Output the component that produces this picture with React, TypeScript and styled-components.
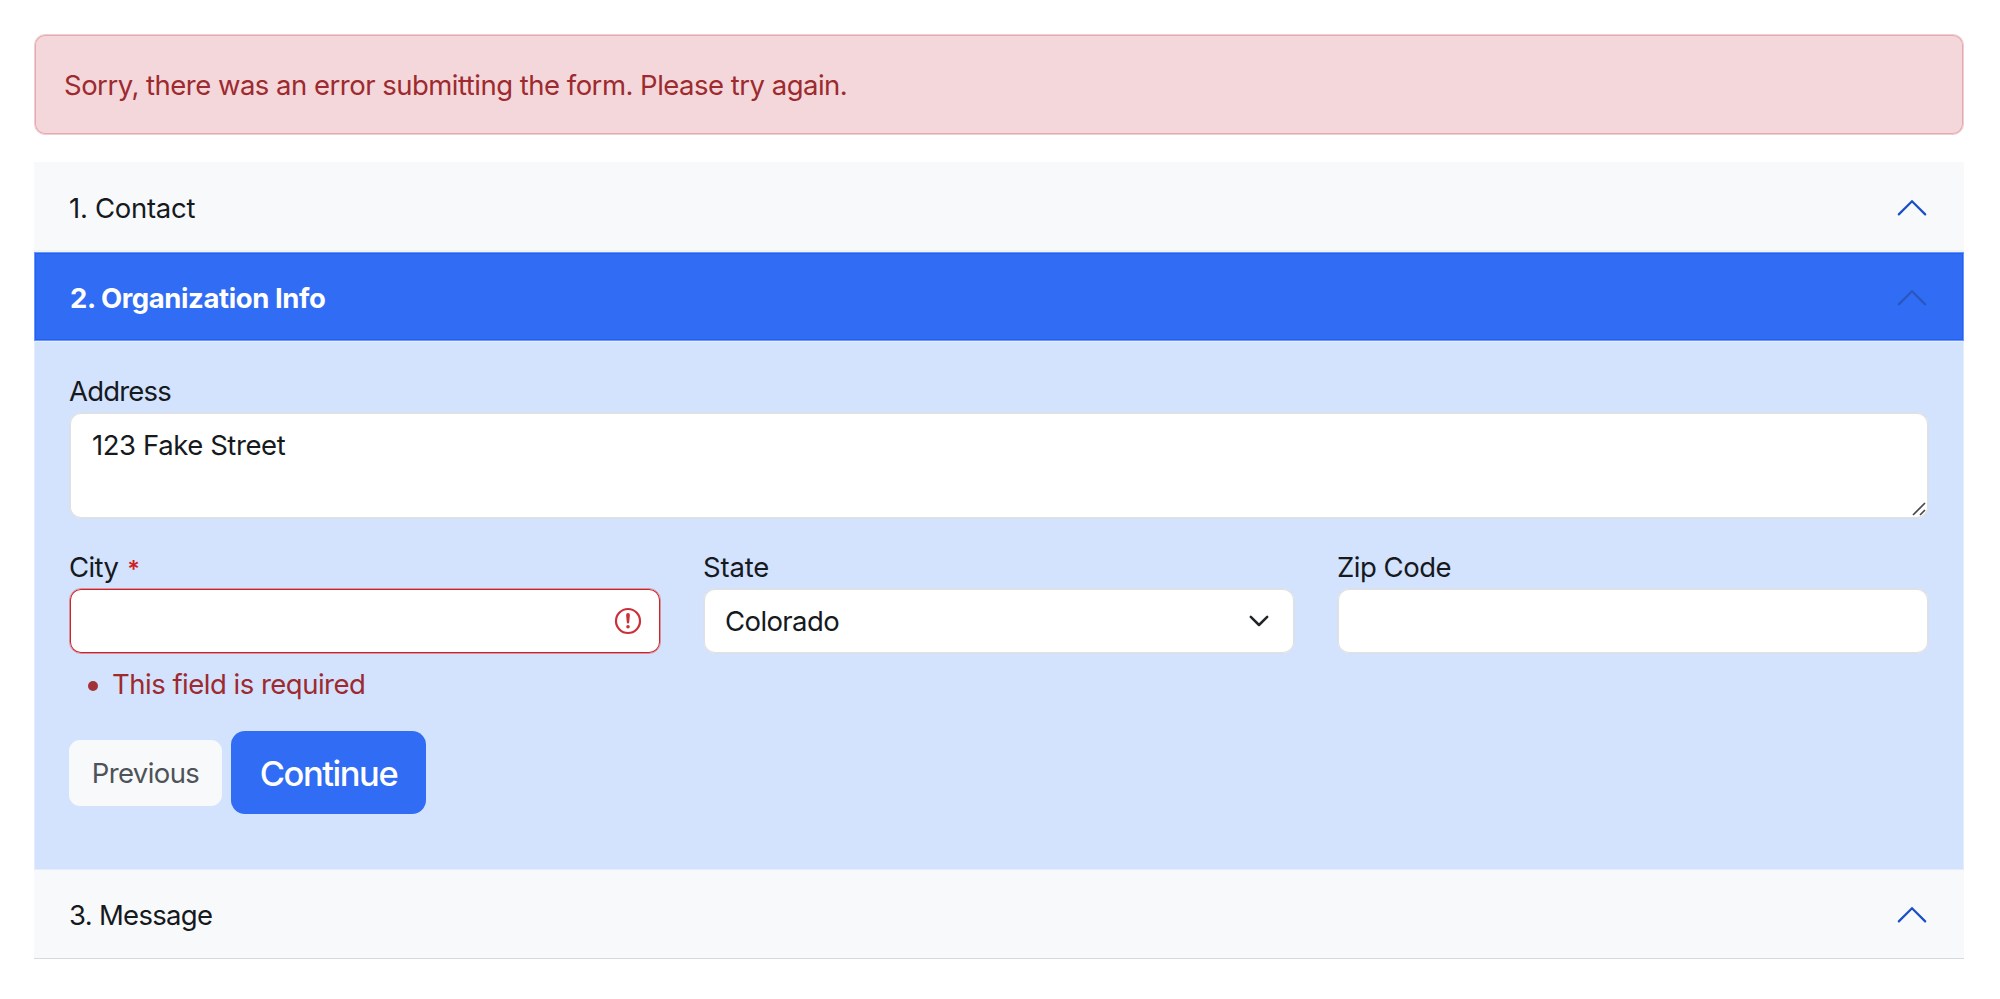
import React from 'react';
import styled, { createGlobalStyle } from 'styled-components';

const GlobalStyle = createGlobalStyle`
  *, *::before, *::after { box-sizing: border-box; }
  body {
    margin: 0;
    background: #fff;
    color: #16191d;
    font-family: Inter, "Liberation Sans", sans-serif;
    font-size: 27.5px;
    line-height: 42px;
  }
`;

const Page = styled.main`
  display: flex;
  flex-direction: column;
  gap: 27px;
  width: 2000px;
  height: 999px;
  padding: 34px 36px 0 34px;
`;

const Alert = styled.div`
  height: 101px;
  padding: 29px 29px;
  border: 1px solid #efcdd1;
  border-radius: 11px;
  background: #f3d7da;
  box-shadow: inset 0 0 0 1px #e6a9b0;
  color: #9d2a2f;
  letter-spacing: -0.51px;
`;

const Accordion = styled.div`
  display: flex;
  flex-direction: column;
`;

const Header = styled.button<{ $active?: boolean; $last?: boolean; $spacing: number }>`
  display: flex;
  align-items: center;
  justify-content: space-between;
  height: ${(p) => (p.$active || p.$last ? 89 : 90)}px;
  padding: ${(p) => (p.$active ? '2px 36px 0 35px' : p.$last ? '1px 37px 0 35px' : '2px 37px 0 35px')};
  border: ${(p) => (p.$active ? '1px solid #6c97f8' : '0')};
  background: ${(p) => (p.$active ? '#316cf4' : '#f8f9fb')};
  box-shadow: ${(p) =>
    p.$active ? 'inset 0 0 0 1px #1f5ff2' : p.$last ? 'inset 0 -1px 0 #d5dae0' : 'inset 0 -2px 0 #f1f2f3'};
  color: ${(p) => (p.$active ? '#fff' : '#16191d')};
  font: inherit;
  font-weight: ${(p) => (p.$active ? 700 : 400)};
  letter-spacing: ${(p) => p.$spacing}px;
  text-align: left;
`;

const Panel = styled.form`
  height: 529px;
  padding: 28px 34px 0;
  border: 1px solid #e4edfd;
  background: #d3e2fd;
`;

const Field = styled.div`
  display: flex;
  flex-direction: column;
`;

const Label = styled.label<{ $spacing: number }>`
  height: 42px;
  letter-spacing: ${(p) => p.$spacing}px;
`;

const Star = styled.span`
  margin-left: 9px;
  color: #cf1f24;
  font-size: 23.5px;
  font-weight: 600;
`;

const Control = styled.div`
  position: relative;
  display: flex;
`;

const TextArea = styled.textarea`
  display: block;
  width: 100%;
  height: 107px;
  padding: 11px 22px;
  border: 1px solid #d8e0ec;
  border-radius: 12px;
  outline: 0;
  background: #fff;
  box-shadow: inset 0 0 0 1px #dfe1e4;
  color: inherit;
  font: inherit;
  letter-spacing: -0.42px;
  resize: none;
`;

const Row = styled.div`
  display: grid;
  grid-template-columns: repeat(3, 592px);
  column-gap: 42px;
  margin-top: 27px;
`;

const Input = styled.input<{ $invalid?: boolean }>`
  width: 100%;
  height: 66px;
  padding: 0 21px;
  border: 1px solid ${(p) => (p.$invalid ? '#d8939f' : '#d8e0ec')};
  border-radius: 12px;
  outline: 0;
  background: #fff;
  box-shadow: inset 0 0 0 1px ${(p) => (p.$invalid ? '#c9232c' : '#dfe1e4')};
  color: inherit;
  font: inherit;
`;

const SelectBox = styled.div`
  display: flex;
  align-items: center;
  justify-content: space-between;
  width: 100%;
  height: 66px;
  padding: 0 25px 0 21px;
  border: 1px solid #d8e0ec;
  border-radius: 12px;
  background: #fff;
  box-shadow: inset 0 0 0 1px #dfe1e4;
  letter-spacing: -0.6px;
`;

const InvalidMark = styled.svg`
  position: absolute;
  top: 19px;
  right: 19px;
`;

const Grip = styled.svg`
  position: absolute;
  right: 2px;
  bottom: 2px;
`;

const Errors = styled.ul`
  display: flex;
  flex-direction: column;
  margin: 9px 0 0;
  padding: 0 0 0 19px;
  list-style: none;
  color: #9d2a2f;
  letter-spacing: -0.5px;
`;

const ErrorItem = styled.li`
  display: flex;
  align-items: center;
  gap: 14px;

  &::before {
    content: '';
    width: 10px;
    height: 10px;
    margin-top: 3px;
    border-radius: 50%;
    background: #a33237;
  }
`;

const Actions = styled.div`
  display: flex;
  align-items: center;
  gap: 9px;
  margin-top: 26px;
`;

const Button = styled.button<{ $primary?: boolean }>`
  width: ${(p) => (p.$primary ? 195 : 153)}px;
  height: ${(p) => (p.$primary ? 83 : 66)}px;
  padding: ${(p) => (p.$primary ? '2px 0 0' : '0')};
  border: 0;
  border-radius: ${(p) => (p.$primary ? 14 : 11)}px;
  background: ${(p) => (p.$primary ? '#316cf4' : '#f8f9fb')};
  color: ${(p) => (p.$primary ? '#fff' : '#4d5358')};
  font: inherit;
  font-size: ${(p) => (p.$primary ? '34.5px' : '27.5px')};
  font-weight: ${(p) => (p.$primary ? 500 : 400)};
  letter-spacing: ${(p) => (p.$primary ? '-1.45px' : '-0.6px')};
`;

const Chevron = ({ color = '#1a4fc4' }: { color?: string }) => (
  <svg width="30" height="18" viewBox="0 0 30 18" fill="none">
    <path d="M1.8 15.4 15 2.2l13.2 13.2" stroke={color} strokeWidth="2.2" strokeLinecap="round" />
  </svg>
);

export default function App() {
  return (
    <>
      <GlobalStyle />
      <Page>
        <Alert role="alert">Sorry, there was an error submitting the form. Please try again.</Alert>
        <Accordion>
          <Header type="button" $spacing={-0.28}>
            1. Contact
            <Chevron />
          </Header>
          <Header type="button" $active $spacing={-0.41}>
            2. Organization Info
            <Chevron color="#2957bf" />
          </Header>
          <Panel>
            <Field>
              <Label htmlFor="address" $spacing={-0.8}>Address</Label>
              <Control>
                <TextArea id="address" defaultValue="123 Fake Street" spellCheck={false} />
                <Grip width="16" height="16" viewBox="0 0 16 16" fill="none">
                  <path d="M2 14 14 2M9 14l5-5" stroke="#45484c" strokeWidth="1.7" />
                </Grip>
              </Control>
            </Field>
            <Row>
              <Field>
                <Label htmlFor="city" $spacing={-0.6}>
                  City<Star>*</Star>
                </Label>
                <Control>
                  <Input id="city" $invalid />
                  <InvalidMark width="28" height="28" viewBox="0 0 28 28" fill="none">
                    <circle cx="14" cy="14" r="12" stroke="#cb3039" strokeWidth="2.2" />
                    <path d="M12.1 7.9a1.9 1.9 0 0 1 3.8 0l-.7 7.4a1.2 1.2 0 0 1-2.4 0z" fill="#cb3039" />
                    <circle cx="14" cy="19.7" r="1.8" fill="#cb3039" />
                  </InvalidMark>
                </Control>
                <Errors>
                  <ErrorItem>This field is required</ErrorItem>
                </Errors>
              </Field>
              <Field>
                <Label $spacing={-0.18}>State</Label>
                <SelectBox role="combobox">
                  Colorado
                  <svg width="20" height="12" viewBox="0 0 20 12" fill="none">
                    <path
                      d="m1.8 1.8 8.2 8.2 8.2-8.2"
                      stroke="#212529"
                      strokeWidth="2.5"
                      strokeLinecap="round"
                      strokeLinejoin="round"
                    />
                  </svg>
                </SelectBox>
              </Field>
              <Field>
                <Label htmlFor="zip" $spacing={-0.48}>Zip Code</Label>
                <Input id="zip" />
              </Field>
            </Row>
            <Actions>
              <Button type="button">Previous</Button>
              <Button type="button" $primary>Continue</Button>
            </Actions>
          </Panel>
          <Header type="button" $last $spacing={-0.7}>
            3. Message
            <Chevron />
          </Header>
        </Accordion>
      </Page>
    </>
  );
}
